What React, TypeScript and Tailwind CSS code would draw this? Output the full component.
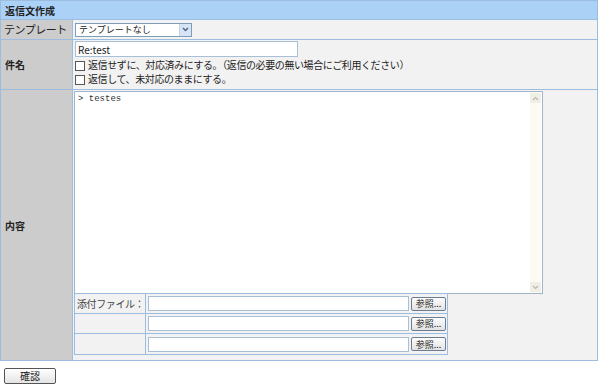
import React from "react";

const font = { fontFamily: '"Noto Sans CJK JP", "Liberation Sans", sans-serif' };

function Checkbox({ label }: { label: string }) {
  return (
    <div className="flex items-center h-[14px] text-[10px] tracking-[-0.4px] text-[#222] leading-none whitespace-nowrap">
      <span className="w-[10px] h-[10px] border border-[#555] bg-white mr-[3px] mt-[1px] shrink-0" />
      <span>{label}</span>
    </div>
  );
}

function FileRow({ label, last }: { label?: string; last?: boolean }) {
  return (
    <div className={"flex h-[20px] " + (last ? "" : "border-b border-[#9dbde0]")}>
      <div className="w-[71px] shrink-0 bg-[#f2f2f2] border-r border-[#9dbde0] flex items-center pl-[2px] text-[10px] tracking-[-0.4px] whitespace-nowrap text-[#444]">
        {label}
      </div>
      <div className="flex items-center pl-[2px] gap-[2px] bg-[#f2f2f2] flex-1">
        <div className="w-[261px] h-[15px] bg-white border border-[#a9bfd6]" />
        <button className="w-[35px] h-[14px] border border-[#6b7c93] rounded-[2px] bg-gradient-to-b from-[#fdfdfd] to-[#e2e2e2] text-[9px] leading-none text-[#222] flex items-center justify-center">
          参照...
        </button>
      </div>
    </div>
  );
}

export default function App() {
  return (
    <div className="w-[600px] h-[385px] bg-white" style={font}>
      <div className="w-[598px] border border-[#9dbde0]">
        {/* header */}
        <div className="h-[18px] bg-[#acd1f6] flex items-center pl-[4px] text-[10px] font-bold text-[#222]">
          返信文作成
        </div>

        {/* template row */}
        <div className="flex h-[20px] border-t border-[#9dbde0]">
          <div className="w-[72px] shrink-0 bg-[#cccccc] border-r border-[#9dbde0] flex items-center pl-[3px] text-[11px] tracking-[-0.5px] whitespace-nowrap text-[#222]">
            テンプレート
          </div>
          <div className="flex-1 bg-[#f2f2f2] flex items-center pl-[2px]">
            <div className="w-[117px] h-[14px] bg-white border border-[#7f9db9] flex items-center justify-between text-[9px] whitespace-nowrap text-[#222] pl-[3px]">
              <span>テンプレートなし</span>
              <span className="w-[12px] h-[12px] bg-[#d6e4f6] border-l border-[#c3d3ea] flex items-center justify-center">
                <svg width="7" height="5" viewBox="0 0 7 5">
                  <path d="M1 1 L3.5 3.5 L6 1" stroke="#4d6185" strokeWidth="1.4" fill="none" />
                </svg>
              </span>
            </div>
          </div>
        </div>

        {/* subject row */}
        <div className="flex h-[50px] border-t border-[#9dbde0]">
          <div className="w-[72px] shrink-0 bg-[#cccccc] border-r border-[#9dbde0] flex items-center pl-[4px] text-[10px] font-bold text-[#222]">
            件名
          </div>
          <div className="flex-1 bg-[#f2f2f2] pl-[2px] pt-[1px] flex flex-col">
            <div className="w-[223px] h-[16px] bg-white border border-[#a9bfd6] flex items-center pl-[2px] text-[10px] text-[#222]">
              Re:test
            </div>
            <div className="mt-[1px]">
              <Checkbox label="返信せずに、対応済みにする。（返信の必要の無い場合にご利用ください）" />
            </div>
            <Checkbox label="返信して、未対応のままにする。" />
          </div>
        </div>

        {/* body row */}
        <div className="flex h-[271px] border-t border-[#9dbde0]">
          <div className="w-[72px] shrink-0 bg-[#cccccc] border-r border-[#9dbde0] flex items-center pl-[4px] text-[10px] font-bold text-[#222]">
            内容
          </div>
          <div className="flex-1 bg-[#f2f2f2] pl-[1px] pt-[1px]">
            <div className="w-[469px] h-[203px] bg-white border border-[#a0b4cc] flex">
              <div
                className="flex-1 pl-[3px] pt-[1px] text-[9px] text-[#333] whitespace-pre"
                style={{ fontFamily: '"Liberation Mono", "DejaVu Sans Mono", monospace' }}
              >
                &gt; testes
              </div>
              <div className="w-[11px] bg-[#fbfbf4] flex flex-col justify-between items-center py-[1px] mr-[1px]">
                <span className="w-[11px] h-[10px] bg-[#efefe6] flex items-center justify-center">
                  <svg width="7" height="5" viewBox="0 0 7 5">
                    <path d="M1 4 L3.5 1.5 L6 4" stroke="#b8b8b0" strokeWidth="1.2" fill="none" />
                  </svg>
                </span>
                <span className="w-[11px] h-[10px] bg-[#efefe6] flex items-center justify-center">
                  <svg width="7" height="5" viewBox="0 0 7 5">
                    <path d="M1 1 L3.5 3.5 L6 1" stroke="#b8b8b0" strokeWidth="1.2" fill="none" />
                  </svg>
                </span>
              </div>
            </div>
            <div className="w-[374px] border border-[#9dbde0] mt-[-1px]">
              <FileRow label="添付ファイル：" />
              <FileRow />
              <FileRow last />
            </div>
          </div>
        </div>
      </div>

      <div className="pl-[4px] pt-[7px]">
        <button className="w-[52px] h-[16px] border border-[#555] rounded-[2px] bg-gradient-to-b from-[#ffffff] to-[#e4e4e4] text-[10px] leading-none text-[#222] flex items-center justify-center">
          確認
        </button>
      </div>
    </div>
  );
}
